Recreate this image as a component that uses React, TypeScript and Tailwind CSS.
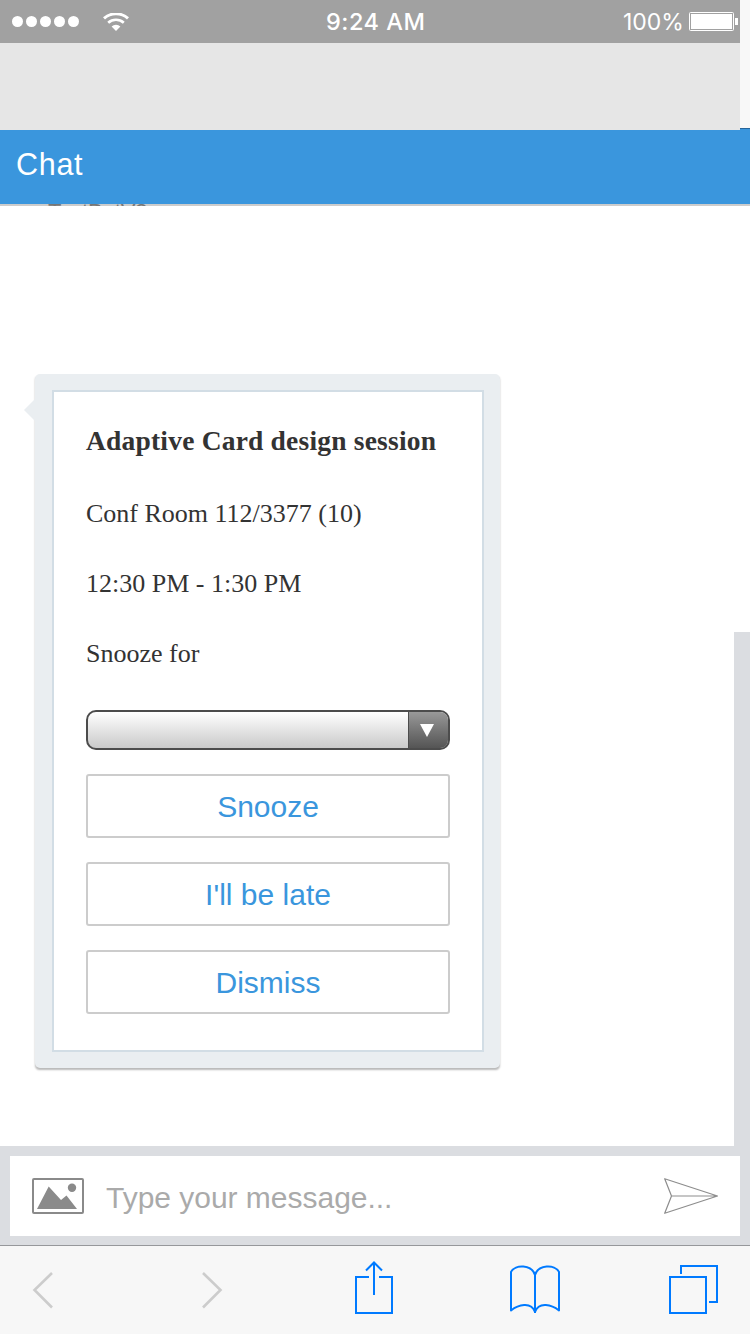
import React from "react";

function StatusBar() {
  return (
    <div className="flex h-[43px] w-[740px] items-center bg-[#a1a1a1] pl-3 text-white">
      <div className="flex w-[313px] items-center">
        <div className="flex gap-[3px]">
          {[0, 1, 2, 3, 4].map((i) => (
            <span key={i} className="h-[11px] w-[11px] rounded-full bg-white" />
          ))}
        </div>
        <svg className="ml-6 h-[18px] w-[26px]" viewBox="0 0 26 18" fill="none" stroke="#fff">
          <path d="M1 5.400A18 18 0 0 1 25 5.400" strokeWidth="3" />
          <path d="M5.200 9.700A11.800 11.800 0 0 1 20.800 9.700" strokeWidth="2.700" />
          <path d="M8.600 13.400A6.400 6.400 0 0 1 17.400 13.400L13 18Z" fill="#fff" stroke="none" />
        </svg>
      </div>
      <div className="w-[298px] pt-px pl-px text-[23.5px] leading-none font-medium tracking-[0.5px] whitespace-nowrap font-[Inter,sans-serif]">9:24 AM</div>
      <div className="w-[66px] pt-[2px] text-[23px] leading-none whitespace-nowrap font-[Inter,sans-serif]">100%</div>
      <svg className="h-[19px] w-[49px]" viewBox="0 0 49 19">
        <rect x=".5" y=".5" width="44" height="18" rx="1" fill="none" stroke="#fff" />
        <rect x="2" y="2" width="41" height="15" fill="#fff" />
        <rect x="46" y="6" width="3" height="7" fill="#fff" />
      </svg>
    </div>
  );
}

function Top() {
  return (
    <div className="flex h-[130px] shrink-0 bg-[#3a96dd]">
      <div className="flex w-[740px] flex-col bg-[#e6e6e6]">
        <StatusBar />
      </div>
      <div className="h-[129px] w-[10px] border-b border-[#27659a] bg-[#f8f8f8]" />
    </div>
  );
}

function ActionButton({ label }: { label: string }) {
  return (
    <button className="flex h-16 w-full items-center justify-center rounded-[3px] border-2 border-[#ccc] pt-[2px] text-[30px] leading-none text-[#3a96dd]">
      {label}
    </button>
  );
}

function Card() {
  return (
    <div className="relative mt-[168px] ml-[35px] h-[694px] w-[465px] rounded-[5px] bg-[#eaeef1] px-[17px] pt-4 shadow-[0_2px_2px_-0.5px_rgba(0,0,0,0.28)]">
      <svg className="absolute top-[24px] -left-[11px] h-[24px] w-[12px]" viewBox="0 0 12 24">
        <path d="M12 0V24L0 12Z" fill="#eaeef1" />
      </svg>
      <div className="h-[662px] w-[432px] border-2 border-[#d2dde5] bg-white px-8 text-[#333] font-['Liberation_Serif',serif]">
        <div className="mt-[30px] h-[38px] text-[27.500px] leading-[38px] font-bold tracking-[0.2px] whitespace-nowrap">Adaptive Card design session</div>
        <div className="mt-[36px] h-9 text-[26px] leading-9 whitespace-nowrap">Conf Room 112/3377 (10)</div>
        <div className="mt-[34px] h-9 text-[26px] leading-9 whitespace-nowrap">12:30 PM - 1:30 PM</div>
        <div className="mt-[34px] h-9 text-[26px] leading-9 whitespace-nowrap">Snooze for</div>
        <div className="mt-[38px] flex h-10 overflow-hidden rounded-[10px] border-2 border-[#4c4c4c] bg-linear-to-b from-white to-[#cacaca]">
          <div className="flex-1" />
          <div className="flex w-[40px] justify-center border-l border-[#4c4c4c] bg-linear-to-b from-[#999] to-[#555] pt-[12px]">
            <svg className="-ml-[3px] h-[13px] w-[14px]" viewBox="0 0 14 13">
              <path d="M0 0H14L7 13Z" fill="#fff" />
            </svg>
          </div>
        </div>
        <div className="mt-6 flex flex-col gap-6 font-['Liberation_Sans',sans-serif]">
          <ActionButton label="Snooze" />
          <ActionButton label="I'll be late" />
          <ActionButton label="Dismiss" />
        </div>
      </div>
    </div>
  );
}

function Composer() {
  return (
    <div className="h-[99px] shrink-0 bg-[#dbdde1] px-[10px] pt-[10px]">
      <div className="flex h-20 items-center bg-white pr-[21px] pl-[22px]">
        <svg className="h-9 w-[52px]" viewBox="0 0 52 36">
          <rect x="1" y="1" width="50" height="34" rx="1" fill="none" stroke="#8a8a8a" strokeWidth="2" />
          <path d="M5 31L16.700 8.500L29 22L34.500 17.500L45 31Z" fill="#8a8a8a" />
          <circle cx="40" cy="9.700" r="4.200" fill="#8a8a8a" />
        </svg>
        <span className="mt-[3px] ml-[22px] flex-1 text-[30px] leading-9 tracking-[-0.020px] whitespace-nowrap text-[#aaa]">Type your message...</span>
        <svg className="h-9 w-[55px]" viewBox="0 0 55 36" fill="none" stroke="#8d8d8d" strokeWidth="1.200" strokeLinejoin="round">
          <path d="M.700 .700L53.500 18L.700 35.300L7.500 18ZM7.500 18H53.500" />
        </svg>
      </div>
    </div>
  );
}

function Toolbar() {
  return (
    <div className="flex h-[89px] shrink-0 items-start border-t border-[#96989b] bg-[#f7f7f7]">
      <svg className="mt-[25px] ml-[32px] h-[38px] w-[22px]" viewBox="0 0 22 38" fill="none" stroke="#ccc" strokeWidth="2.600">
        <path d="M20 2L2.500 19L20 36.500" />
      </svg>
      <svg className="mt-[25px] ml-[147px] h-[38px] w-[22px]" viewBox="0 0 22 38" fill="none" stroke="#ccc" strokeWidth="2.600">
        <path d="M2 2L19.500 19L2 36.500" />
      </svg>
      <svg className="mt-[15px] ml-[132px] h-[53px] w-[38px]" viewBox="0 0 38 53" fill="none" stroke="#007aff" strokeWidth="2">
        <path d="M14 16H1V52H37V16H24M19 34V2M11 9.500L19 1.500L27 9.500" />
      </svg>
      <svg className="mt-[19px] ml-[117px] h-[50px] w-[50px]" viewBox="0 0 50 50" fill="none" stroke="#007aff" strokeWidth="2" strokeLinejoin="round">
        <path d="M25 48V10C22 -.5 5 -1 1 7V45.500C8 40 21 36 25 47C29 36 42 40 49 45.500V7C45 -1 28 -.5 25 10" />
      </svg>
      <svg className="mt-[19px] ml-[109px] h-[49px] w-[49px]" viewBox="0 0 49 49" fill="none" stroke="#007aff" strokeWidth="2">
        <path d="M1 12H37V48H1ZM12 9V1H48V37H40" />
      </svg>
    </div>
  );
}

export default function App() {
  return (
    <div className="flex h-[1334px] w-[750px] flex-col overflow-hidden bg-white font-['Liberation_Sans',sans-serif]">
      <Top />
      <div className="h-[74px] shrink-0 bg-[#3a96dd] pt-[16px] pl-4 text-[30.500px] leading-9 tracking-[0.700px] text-white">Chat</div>
      <div className="h-[2px] shrink-0 overflow-hidden bg-[#ccc] pl-12">
        <div className="-mt-[3px] text-[22px] leading-[22px] tracking-[-0.100px] text-[#777]">TestBotV3</div>
      </div>
      <div className="flex h-[940px] shrink-0 items-end justify-between">
        <div className="h-full">
          <Card />
        </div>
        <div className="h-[514px] w-4 bg-[#dbdde1]" />
      </div>
      <Composer />
      <Toolbar />
    </div>
  );
}
